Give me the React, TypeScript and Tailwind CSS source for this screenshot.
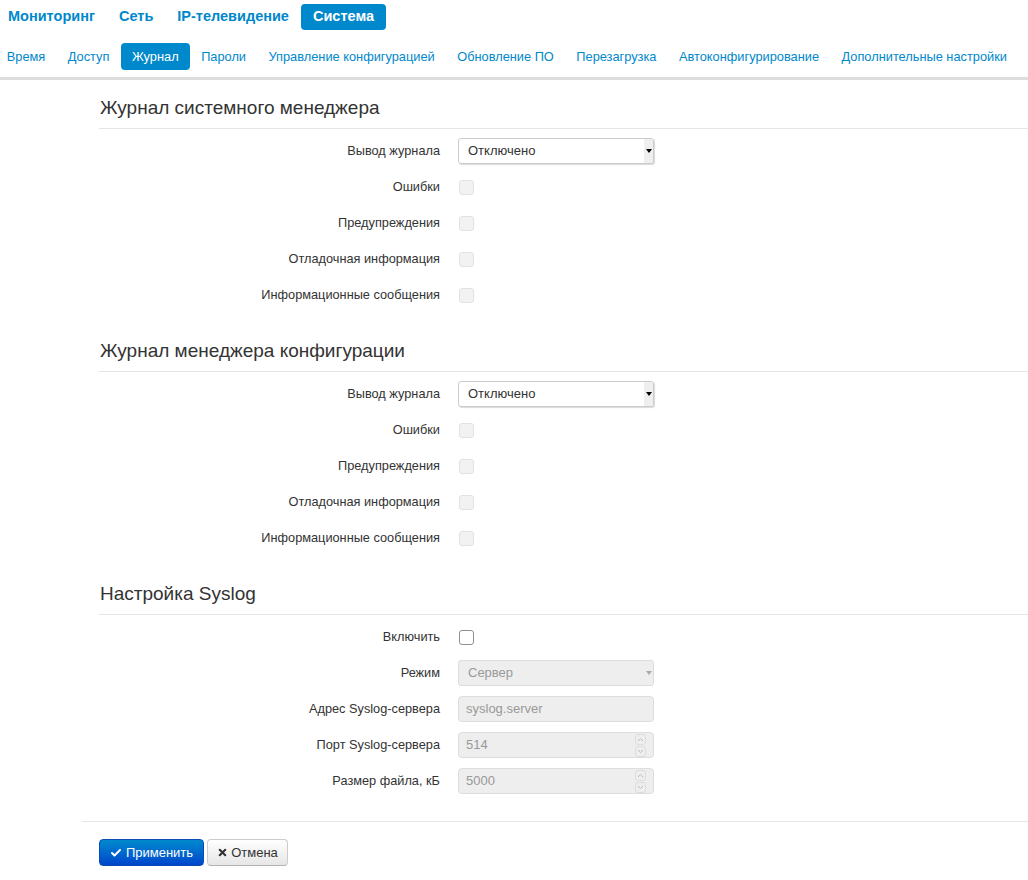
import { Check, X } from 'lucide-react';

const topTabs = ['Мониторинг', 'Сеть', 'IP-телевидение', 'Система'];
const subTabs = [
  'Время',
  'Доступ',
  'Журнал',
  'Пароли',
  'Управление конфигурацией',
  'Обновление ПО',
  'Перезагрузка',
  'Автоконфигурирование',
  'Дополнительные настройки',
];

function Row({ label, children }: { label: string; children: React.ReactNode }) {
  return (
    <div className="flex items-center h-[26px] mb-[10px]">
      <div className="w-[341px] text-right text-[12.75px] text-[#333]">{label}</div>
      <div className="ml-[18px] flex items-center">{children}</div>
    </div>
  );
}

function SelectBox({ value, disabled }: { value: string; disabled?: boolean }) {
  return (
    <div
      className={`w-[196px] h-[26px] flex items-stretch rounded-[3px] border text-[13px] ${
        disabled ? 'bg-[#eee] border-[#ddd] text-[#999]' : 'bg-white border-[#ccc] text-[#333] shadow-[1px_1px_1px_rgba(0,0,0,0.15)]'
      }`}
    >
      <span className="flex-1 flex items-center pl-[9px]">{value}</span>
      <span className={`w-[9px] flex items-center justify-center rounded-r-[3px] ${disabled ? 'bg-[#eee]' : 'bg-[#efefef]'}`}>
        <span
          className={`w-0 h-0 border-l-[3px] border-r-[3px] border-t-[4px] border-l-transparent border-r-transparent ${
            disabled ? 'border-t-[#aaa]' : 'border-t-black'
          }`}
        />
      </span>
    </div>
  );
}

function DisabledCheck() {
  return <div className="w-[15px] h-[15px] ml-[1px] rounded-[3px] border border-[#e2e2e2] bg-[#f2f2f2]" />;
}

function TextBox({ value, spinner }: { value: string; spinner?: boolean }) {
  return (
    <div className="w-[196px] h-[26px] flex items-center rounded-[4px] border border-[#ddd] bg-[#eee] text-[13px] text-[#999] pl-[7px] pr-[7px]">
      <span className="flex-1">{value}</span>
      {spinner && (
        <span className="flex flex-col gap-[1px]">
          <span className="w-[11px] h-[11px] rounded-[3px] border border-[#ddd] flex items-center justify-center">
            <svg width="7" height="5" viewBox="0 0 7 5">
              <path d="M1 4 L3.5 1.5 L6 4" fill="none" stroke="#bbb" strokeWidth="1" />
            </svg>
          </span>
          <span className="w-[11px] h-[11px] rounded-[3px] border border-[#ddd] flex items-center justify-center">
            <svg width="7" height="5" viewBox="0 0 7 5">
              <path d="M1 1 L3.5 3.5 L6 1" fill="none" stroke="#bbb" strokeWidth="1" />
            </svg>
          </span>
        </span>
      )}
    </div>
  );
}

function Heading({ title }: { title: string }) {
  return (
    <div className="ml-[99px] border-b border-[#e5e5e5] h-[41px] leading-[40px] text-[19px] text-[#333] pl-[1px]">
      {title}
    </div>
  );
}

function LogSection({ title }: { title: string }) {
  return (
    <div className="pb-[13px]">
      <Heading title={title} />
      <div className="mt-[9px] ml-[99px] flex flex-col">
        <Row label="Вывод журнала">
          <SelectBox value="Отключено" />
        </Row>
        <Row label="Ошибки">
          <DisabledCheck />
        </Row>
        <Row label="Предупреждения">
          <DisabledCheck />
        </Row>
        <Row label="Отладочная информация">
          <DisabledCheck />
        </Row>
        <Row label="Информационные сообщения">
          <DisabledCheck />
        </Row>
      </div>
    </div>
  );
}

export default function App() {
  return (
    <div className="w-[1028px] min-h-[880px] bg-white font-['Liberation_Sans',Arial,sans-serif] overflow-hidden">
      {/* Main tabs */}
      <div className="flex -ml-[4px] mt-[4px] h-[26px]">
        {topTabs.map((t) => (
          <div
            key={t}
            className={`px-3 flex items-center text-[14.5px] font-bold rounded-[4px] ${
              t === 'Система' ? 'bg-[#0088cc] text-white' : 'text-[#0088cc]'
            }`}
          >
            {t}
          </div>
        ))}
      </div>

      {/* Sub tabs */}
      <div className="flex -ml-[4.5px] mt-[13px] h-[27px]">
        {subTabs.map((t) => (
          <div
            key={t}
            className={`px-[11.25px] flex items-center text-[12.8px] rounded-[4px] whitespace-nowrap ${
              t === 'Журнал' ? 'bg-[#0088cc] text-white' : 'text-[#0088cc]'
            }`}
          >
            {t}
          </div>
        ))}
      </div>
      <div className="mt-[7px] h-[3px] bg-[#dddddd]" />

      <div className="mt-[8px]">
        <LogSection title="Журнал системного менеджера" />
        <LogSection title="Журнал менеджера конфигурации" />

        <div>
          <Heading title="Настройка Syslog" />
          <div className="mt-[9px] ml-[99px] flex flex-col">
            <Row label="Включить">
              <div className="w-[15px] h-[15px] ml-[1px] rounded-[3px] border border-[#8f8f8f] bg-white" />
            </Row>
            <Row label="Режим">
              <SelectBox value="Сервер" disabled />
            </Row>
            <Row label="Адрес Syslog-сервера">
              <TextBox value="syslog.server" />
            </Row>
            <Row label="Порт Syslog-сервера">
              <TextBox value="514" spinner />
            </Row>
            <Row label="Размер файла, кБ">
              <TextBox value="5000" spinner />
            </Row>
          </div>
        </div>
      </div>

      {/* Footer */}
      <div className="ml-[82px] mt-[17px] border-t border-[#e5e5e5] pt-[17px] pl-[17px] flex gap-[3px]">
        <button className="h-[27px] w-[105px] flex items-center justify-center gap-[4px] rounded-[4px] border border-[#0a4cb3] bg-gradient-to-b from-[#0088cc] to-[#0044cc] text-white text-[13px]">
          <Check size={12} strokeWidth={4} />
          Применить
        </button>
        <button className="h-[27px] w-[81px] flex items-center justify-center gap-[3px] rounded-[4px] border border-[#ccc] border-b-[#b3b3b3] bg-gradient-to-b from-white to-[#e6e6e6] text-[#333] text-[13px]">
          <X size={11} strokeWidth={4.5} />
          Отмена
        </button>
      </div>
    </div>
  );
}
